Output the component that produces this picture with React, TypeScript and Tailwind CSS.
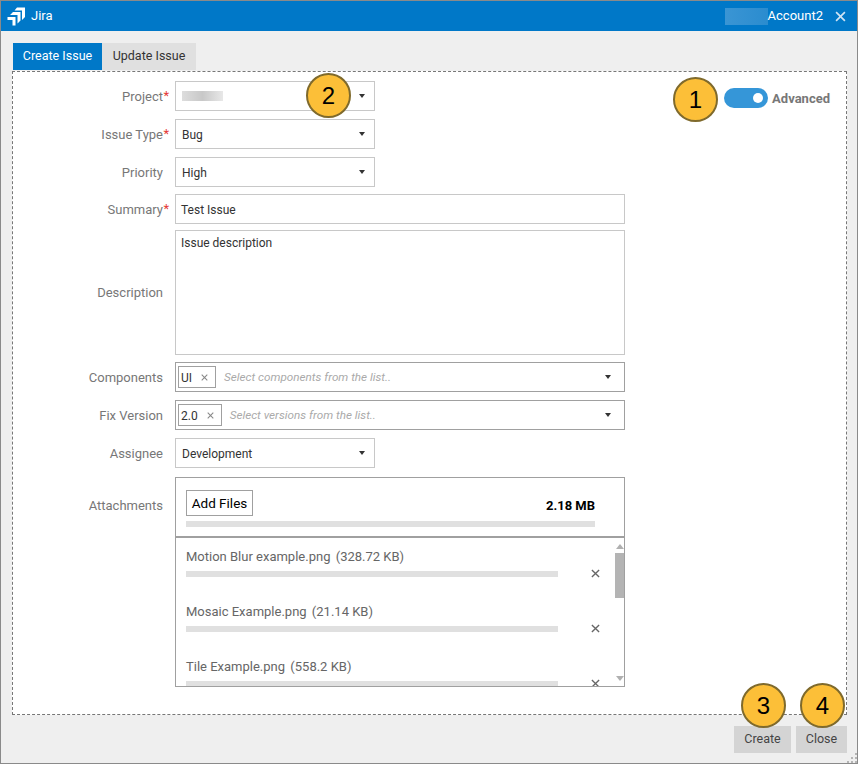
import type { ReactNode } from "react";

const font = "font-['Roboto','Noto_Sans',sans-serif]";

function Caret() {
  return <span className="h-0 w-0 border-x-[3.5px] border-t-[4px] border-x-transparent border-t-[#333]" />;
}

function Callout({ n, className }: { n: number; className: string }) {
  return (
    <div
      className={`absolute flex h-[45px] w-[45px] items-center justify-center rounded-full border-2 border-[#7f6a2c] bg-[#fcbf38] font-['Liberation_Sans',sans-serif] text-[24px] text-black ${className}`}
    >
      {n}
    </div>
  );
}

function Row({ label, required, tall, className, children }: { label: string; required?: boolean; tall?: boolean; className?: string; children: ReactNode }) {
  return (
    <div className={`flex ${className ?? ""}`}>
      <div className={`flex w-[162px] items-center justify-end pr-[5px] text-[13px] text-[#777] ${tall ? "" : "pt-[2px]"}`}>
        <span className="relative pr-[7px]">
          {label}
          {required && <span className="absolute right-[1px] top-[-1px] text-[#e53935]">*</span>}
        </span>
      </div>
      {children}
    </div>
  );
}

function Select({ value, children }: { value?: string; children?: ReactNode }) {
  return (
    <div className="flex h-[30px] w-[200px] items-center justify-between border border-[#c8c8c8] pl-[6px] pr-[9px] text-[12px] text-[#333]">
      {value ? <span className="mt-[2px]">{value}</span> : children}
      <Caret />
    </div>
  );
}

function TagInput({ tag, placeholder }: { tag: string; placeholder: string }) {
  return (
    <div className="flex h-[30px] w-[450px] items-center border border-[#a0a0a0] pl-[2px] pr-[13px] text-[12px]">
      <span className="flex h-[22px] items-center gap-[9px] border border-[#a0a0a0] pl-[2px] pr-[7px] text-[#333]">
        <span className="mt-[2px]">{tag}</span>
        <XMark className="text-[#888]" size={7} />
      </span>
      <span className="ml-[8px] mt-[2px] flex-1 text-[11.7px] italic text-[#aaa]">{placeholder}</span>
      <Caret />
    </div>
  );
}

function XMark({ className, size }: { className: string; size: number }) {
  return (
    <svg viewBox="0 0 10 10" width={size} height={size} className={className}>
      <path d="M1 1l8 8M9 1l-8 8" stroke="currentColor" strokeWidth="1.5" fill="none" />
    </svg>
  );
}

function Attachment({ name, size, className }: { name: string; size: string; className?: string }) {
  return (
    <div className={className}>
      <div className="h-[18px] text-[13px] leading-[18px] text-[#666]">
        {name} <span className="ml-[2px]">({size})</span>
      </div>
      <div className="mt-[3px] flex items-center">
        <div className="h-[6px] w-[372px] bg-[#e0e0e0]" />
        <XMark className="ml-[33px] text-[#666]" size={9} />
      </div>
    </div>
  );
}

function JiraLogo() {
  return (
    <svg viewBox="0 0 19 19" width="19" height="19" fill="white">
      <path d="M10 0.500H18V10L15 13V3.500H7.500z" />
      <path d="M6 5H13.500V13.500L10.500 16.500V8H3z" />
      <path d="M0.500 10H8.500V18.500H5.500V13H0.500z" />
    </svg>
  );
}

export default function App() {
  return (
    <div className={`relative flex h-[764px] w-[858px] flex-col border border-[#8a8a8a] bg-[#efefef] ${font}`}>
      <header className="flex h-[30px] items-center bg-[#0078c8] pl-[6px] pr-[11px] text-white">
        <JiraLogo />
        <span className="ml-[5px] text-[13px]">Jira</span>
        <div className="ml-auto h-[17px] w-[43px] bg-gradient-to-r from-[#3a95d4] to-[#2a8ccf]" />
        <span className="text-[13px]">Account2</span>
        <XMark className="ml-[12px] text-[#cfe4f4]" size={11} />
      </header>

      <div className="flex flex-1 flex-col pl-[11px] pr-[10px] pt-[12px]">
        <div className="ml-px flex h-[27px] text-[12.5px]">
          <div className="flex w-[89px] items-center justify-center bg-[#0078c8] text-white">Create Issue</div>
          <div className="flex w-[94px] items-center justify-center bg-[#e0e0e0] text-[#333]">Update Issue</div>
        </div>

        <main className="mt-px flex h-[644px] justify-between border border-dashed border-[#777] bg-white pt-[9px]">
          <div className="flex flex-col">
            <Row label="Project" required>
              <Select>
                <div className="h-[10px] w-[41px] bg-gradient-to-r from-[#ddd] via-[#c8c8c8] to-[#e8e8e8]" />
              </Select>
            </Row>
            <Row label="Issue Type" required className="mt-[8px]">
              <Select value="Bug" />
            </Row>
            <Row label="Priority" className="mt-[8px]">
              <Select value="High" />
            </Row>
            <Row label="Summary" required className="mt-[7px]">
              <div className="flex h-[30px] w-[450px] items-center border border-[#c8c8c8] pl-[5px] pt-[2px] text-[12px] text-[#333]">Test Issue</div>
            </Row>
            <Row label="Description" tall className="mt-[6px]">
              <div className="h-[125px] w-[450px] border border-[#c8c8c8] px-[5px] py-[3px] text-[12px] text-[#333]">Issue description</div>
            </Row>
            <Row label="Components" className="mt-[7px]">
              <TagInput tag="UI" placeholder="Select components from the list.." />
            </Row>
            <Row label="Fix Version" className="mt-[8px]">
              <TagInput tag="2.0" placeholder="Select versions from the list.." />
            </Row>
            <Row label="Assignee" className="mt-[8px]">
              <Select value="Development" />
            </Row>
            <div className="mt-[9px] flex">
              <div className="w-[162px] pr-[12px] pt-[19px] text-right text-[13px] text-[#777]">Attachments</div>
              <div className="w-[450px]">
                <div className="relative h-[59px] border-x border-t border-[#a0a0a0] pl-[10px] pt-[12px]">
                  <div className="flex h-[26px] w-[67px] items-center justify-center border border-[#a0a0a0] text-[13.5px] text-black">Add Files</div>
                  <div className="absolute right-[29px] top-[18px] text-[13px] font-bold text-black">2.18 MB</div>
                  <div className="mt-[5px] h-[6px] w-[409px] bg-[#e0e0e0]" />
                </div>
                <div className="flex h-[151px] overflow-hidden border border-t-2 border-[#a0a0a0]">
                  <div className="flex-1 overflow-hidden pl-[10px] pt-[10px]">
                    <Attachment name="Motion Blur example.png" size="328.72 KB" />
                    <Attachment name="Mosaic Example.png" size="21.14 KB" className="mt-[25px]" />
                    <Attachment name="Tile Example.png" size="558.2 KB" className="mt-[25px]" />
                  </div>
                  <div className="flex w-[9px] flex-col items-center justify-between pb-[5px] pt-[6px]">
                    <span className="h-0 w-0 border-x-[4px] border-b-[5px] border-x-transparent border-b-[#b0b0b0]" />
                    <div className="mb-auto mt-[4px] h-[45px] w-full bg-[#b4b4b4]" />
                    <span className="h-0 w-0 border-x-[4px] border-t-[5px] border-x-transparent border-t-[#b0b0b0]" />
                  </div>
                </div>
              </div>
            </div>
          </div>

          <div className="mr-[16px] mt-[7px] flex h-[20px] items-center gap-[4px] text-[13px] font-bold text-[#777]">
            <div className="flex h-[20px] w-[44px] items-center justify-end rounded-full bg-[#3596d8] pr-[5px]">
              <div className="h-[10px] w-[10px] rounded-full bg-white" />
            </div>
            <span className="mt-[2px]">Advanced</span>
          </div>
        </main>

        <footer className="mt-[11px] flex justify-end gap-[5px] text-[12.5px] text-[#444]">
          <button className="flex h-[27px] w-[57px] items-center justify-center bg-[#d4d4d4]">Create</button>
          <button className="flex h-[27px] w-[51px] items-center justify-center bg-[#d4d4d4]">Close</button>
        </footer>
      </div>

      <svg viewBox="0 0 10 10" width="10" height="10" fill="#b5b5b5" className="absolute bottom-0 right-0">
        <path d="M8 0h2v2H8zM4 4h2v2H4zM8 4h2v2H8zM0 8h2v2H0zM4 8h2v2H4zM8 8h2v2H8z" />
      </svg>

      <Callout n={2} className="left-[305px] top-[72px]" />
      <Callout n={1} className="left-[672px] top-[76px]" />
      <Callout n={3} className="left-[740px] top-[682px]" />
      <Callout n={4} className="left-[799px] top-[682px]" />
    </div>
  );
}
